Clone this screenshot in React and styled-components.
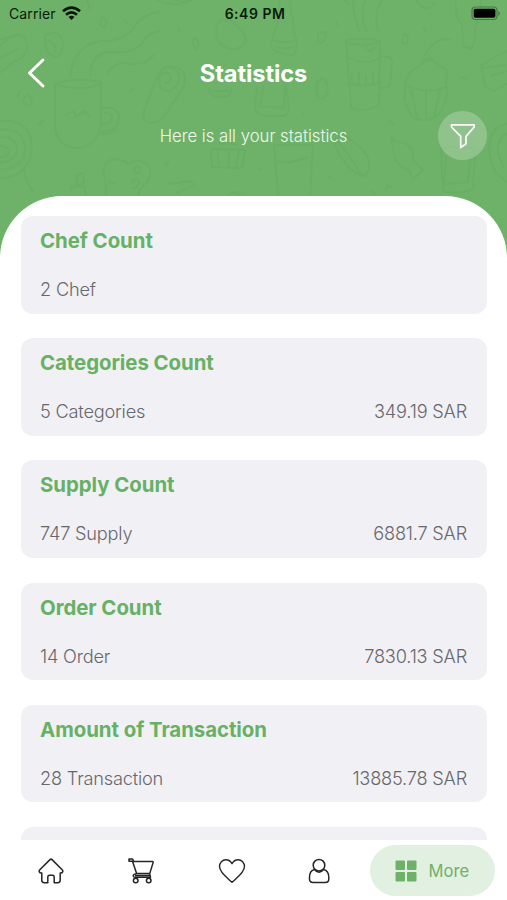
import React from 'react'
import styled, { createGlobalStyle } from 'styled-components'

const GlobalStyle = createGlobalStyle`
  * {
    box-sizing: border-box;
  }
  body {
    margin: 0;
    background: white;
    font-family: Inter, "Liberation Sans", sans-serif;
  }
  h1, h2, p {
    margin: 0;
  }
`

const Screen = styled.div`
  display: flex;
  flex-direction: column;
  width: 507px;
  height: 900px;
  overflow: hidden;
  background: white;
`

const Header = styled.header`
  position: relative;
  flex: 0 0 260px;
  background: #6eb269;
  color: white;
`

/* doodles sit behind the header content */
const Pattern = styled.svg`
  position: absolute;
  inset: 0;
  fill: none;
  stroke: #4f9550;
  stroke-width: 1.9;
  stroke-linecap: round;
  stroke-linejoin: round;
  opacity: 0.13;
`

const HeaderContent = styled.div`
  position: relative;
`

const StatusBar = styled.div`
  display: grid;
  grid-template-columns: 1fr auto 1fr;
  align-items: center;
  height: 27px;
  padding: 0 6px 0 9px;
  color: #0b1a0a;
  font-size: 14px;
  & .carrier {
    display: flex;
    align-items: center;
    gap: 6px;
    letter-spacing: 0.1px;
  }
  & .time {
    font-weight: 600;
    letter-spacing: 0.5px;
  }
  & .battery {
    justify-self: end;
  }
  & svg {
    display: block;
  }
`

const TitleRow = styled.div`
  display: grid;
  grid-template-columns: 60px 1fr 60px;
  align-items: center;
  height: 92px;
  padding: 0 19px 0 19px;
  & svg {
    display: block;
    margin-left: 7px;
  }
  & h1 {
    text-align: center;
    font-size: 23.6px;
    font-weight: 700;
    letter-spacing: -0.1px;
  }
`

const SubtitleRow = styled.div`
  display: grid;
  grid-template-columns: 60px 1fr 60px;
  align-items: center;
  height: 49px;
  margin-top: -8px;
  padding: 0 20px;
  & p {
    grid-column: 2;
    text-align: center;
    font-size: 16.7px;
    font-weight: 300;
    letter-spacing: 0;
    color: #edf8ec;
  }
`

const FilterButton = styled.button`
  display: flex;
  align-items: center;
  justify-content: center;
  justify-self: end;
  width: 49px;
  height: 49px;
  padding: 0;
  border: 0;
  border-radius: 50%;
  background: rgba(255, 255, 255, 0.23);
`

const Sheet = styled.main`
  position: relative;
  flex: 1 1 0;
  min-height: 0;
  margin-top: -64px;
  padding: 20px 20px 0 20.5px;
  overflow: hidden;
  border-radius: 62px 62px 0 0;
  background: white;
`

const Card = styled.section`
  height: 97.5px;
  margin-bottom: 24.7px;
  padding: 12px 20px 0 19.5px;
  border-radius: 12px;
  background: #f1f0f5;
`

const CardTitle = styled.h2`
  height: 26px;
  line-height: 26px;
  font-size: 20.4px;
  font-weight: 650;
  letter-spacing: -0.05px;
  color: #67b165;
`

const CardRow = styled.div`
  display: flex;
  justify-content: space-between;
  margin-top: 23px;
  line-height: 24px;
  font-size: 18.2px;
  font-weight: 300;
  letter-spacing: -0.2px;
  color: #68686c;
`

const TabBar = styled.nav`
  display: flex;
  align-items: center;
  flex: 0 0 60px;
  padding: 1px 12.500px 0 6px;
  background: white;
`

const Tab = styled.a`
  display: flex;
  justify-content: center;
  flex: 0 0 ${props => props.$width}px;
  color: #252525;
`

const ActiveTab = styled.a`
  display: flex;
  align-items: center;
  gap: 12px;
  width: 125px;
  height: 51px;
  margin-left: auto;
  padding-left: 25px;
  border-radius: 26px;
  background: #e1f0e1;
  color: #6eb269;
  font-size: 16.6px;
  font-weight: 400;
`

const stats = [
  { title: 'Chef Count', count: '2 Chef' },
  { title: 'Categories Count', count: '5 Categories', amount: '349.19 SAR' },
  { title: 'Supply Count', count: '747 Supply', amount: '6881.7 SAR' },
  { title: 'Order Count', count: '14 Order', amount: '7830.13 SAR' },
  { title: 'Amount of Transaction', count: '28 Transaction', amount: '13885.78 SAR' },
  { title: '', count: '' },
]

const Doodles = () => (
  <Pattern width="507" height="260" viewBox="0 0 507 260">
    {/* steaming mug */}
    <path d="M55 84q22-7 46-2v42q-2 22-25 24-18-1-21-20zM57 85q20 7 43-1M101 108q16-3 18 9 0 14-18 15M104 113q8-1 8 5t-9 6M66 115l7-4 3 6 8-6 5 5" />
    <path d="M70 77q5-33 31-36 23 1 34-15 10-13 24-14M90 76q0-23 21-24 27 3 35-15 6-4 13-6M107 73q10-13 23-9 15 1 24-9" />
    {/* swiss roll */}
    <path d="M146 106q-6 12 2 16 11 3 18-8l17-26q6-15-6-21-15-3-20 10zM160 80q-1-13 10-13 13 4 8 17-9 11-17 4-5-8 1-14 8-4 9 5-1 6-6 3" />
    {/* bread and leaves */}
    <path d="M0 46q16-16 25-8 6 13-5 21-9 3-20 14M0 40l19-6M0 58l18-9M45 36q9-7 16 1 5 13-4 20-13-1-12-21zM48 40q9 5 7 12M102 17q-5 9 2 10 6-6-2-10zM124 21l3 2M27 94q9 9 2 12-10-2-2-12zM20 91l-2 5M43 121l-4 4" />
    <path d="M217 26q3-9 14-5 15 10 15 20-5 9-16 8-17-5-13-23zM194 38q8 3 2 12-6-8-2-12zM178 29l2 3M130 92l3-3" />
    {/* onion rings */}
    <path d="M0 121q21-2 29 12 7 17-3 33-8 12-26 12M0 130q16-3 23 9 5 12-2 22-9 10-21 8M0 138q11-3 16 6 3 10-3 14-4 4-13 5M0 146q9 0 9 6-1 6-9 5M24 170q4 18 10 22" />
    {/* toast with face */}
    <path d="M106 196q1-11-2-22-2-14 11-15 9 1 13 5 12-7 20 1 6 13-5 21-4 4-5 10M134 168q2-4 6 0 2 7-5 4zM131 183q5-7 8-1-1 7-7 6M109 181q2 5 7 1M77 175l6-2 1 10-8 2zM71 190q0-4 13-4l2 9M168 184l23-3 3 4-18 8M165 166l4-4M99 130q0 4 6 4 13 0 13-14" />
    {/* gift, dishes and jar */}
    <path d="M211 149l34 1-3 18-30-1zM217 150l2 16M229 150v17M239 150l-3 16M219 143l18 1M209 88q1 9 9 9l10-1 4-7M213 91h17M228 196q4-6 9-3l6 4" />
    <path d="M257 87l-2 21q1 8 15 8h14q6-2 5-10l-4-23M263 86l-3 20 24 2 1-21M322 78q-9 8-4 20 8 2 10-8-1-11-6-12zM304 113l-2 3" />
    {/* pitcher */}
    <path d="M346 40q17-3 34 1l-1 64q-13 8-28 3zM346 42q15 6 34 0M349 58q16 8 31 0M347 83q15 5 34 0M352 75v10M359 72v13M366 75v10M373 72v12M381 56l8 1q4 2 3 7l-2 21q-3 5-11 2M366 47l4 5 5-5M367 31q-8-12-2-31M378 30q-5-17 4-30M359 31q-6-17-6-31" />
    {/* bottle and bulb */}
    <path d="M280 0l-2 22-7 20q-2 8 8 10 11 5 16 2 4-13-1-22l-4-32M273 40q10 4 21 1M276 47q8 3 18 0M404 34q7 1 2 10-7 0-2-10zM423 28l3 4M456 2q-2 14 6 23l1 21 9 3 3-12q-1-9 3-17l3-20M318 34q6-5 8 1-3 11-8 7zM336 22l2 3" />
    {/* cupcake */}
    <path d="M405 86q3-17 14-19 11-13 22 0 8 2 5 13 3 21-7 34-14 11-27 2-10-13-7-30zM406 85q20 10 40 2M411 90l6 26M426 91v27M440 90l-6 27M422 65q4-20 20-26l9 1M426 60q4-6 8 2" />
    {/* side pastries */}
    <path d="M507 51l-14 7-12 8 4 20 8 5 14-7M483 68l22-3M491 76l16-5M461 77l6 2M389 121l4 3" />
    {/* juice glasses */}
    <path d="M274 145l4 51M275 145h38l-3 51M278 161q10 4 30-4M335 139q9-6 16 1 14 9 18 21 1 14-6 15-12-4-20-16-9-12-8-21zM337 141q14 15 24 34M258 170l4-2M328 176l4 2" />
    <path d="M391 137l5 5 9 1 7 6 2 13 9 8-10 10-4-10q-10-1-14-12zM441 149q17-4 34 0l-2 40q-14 6-30 2zM446 157l-2 27 24-2 2-25M507 124q-15 2-17 19-3 15 7 31l10 8M507 133q-11 7-9 20l5 14M386 190q1-7 6-2M372 191l4 4" />
    <path d="M157 0q16 7 30 2M345 0l4 4M175 0q9 3 18 0M416 0q9 15 19 3M87 0l3 10" />
  </Pattern>
)

const WifiIcon = () => (
  <svg width="19" height="15" viewBox="0 0 19 15" fill="none" stroke="#0b160a" strokeWidth="2.700">
    <path d="M1 5.200Q9.500-2 18 5.200M4 8.700q5.500-4.600 11 0" />
    <path d="M9.500 14l-3-3.100q3-2.500 6 0z" fill="#0b160a" stroke="none" />
  </svg>
)

const BatteryIcon = () => (
  <svg className="battery" width="30" height="15" viewBox="0 0 30 15">
    <rect x="1" y="1" width="25" height="12.500" rx="3.500" fill="none" stroke="#467a43" strokeWidth="1.200" />
    <rect x="2.700" y="2.800" width="21.700" height="9" rx="1.700" fill="#000" />
    <path d="M27.300 5v5q1.500-.8 1.500-2.500T27.300 5z" fill="#467a43" />
  </svg>
)

const BackIcon = () => (
  <svg width="20" height="32" viewBox="0 0 20 32" fill="none" stroke="white" strokeWidth="2.900" strokeLinecap="round" strokeLinejoin="round">
    <path d="M17 3L3.500 16 17 29" />
  </svg>
)

const FilterIcon = () => (
  <svg width="26" height="26" viewBox="0 0 26 26" fill="none" stroke="white" strokeWidth="1.700" strokeLinejoin="round">
    <path d="M1.500 1.800h22.700v2.200L16 13.400v7.300l-5.300 3.800V13.400L1.500 4z" />
  </svg>
)

const HomeIcon = () => (
  <svg width="26" height="26" viewBox="0 0 26 26" fill="none" stroke="currentColor" strokeWidth="1.500" strokeLinejoin="round">
    <path d="M12 1.600q1-.9 2 0l10.200 10.100c1.300 1.400.4 3.300-1.400 3.300h-.6v7.300q0 2.400-2.400 2.400h-3.600v-5.700q0-1.700-1.700-1.700h-3q-1.700 0-1.700 1.700v5.700H6.200q-2.400 0-2.400-2.400V15h-.6c-1.800 0-2.700-1.900-1.400-3.300z" />
  </svg>
)

const CartIcon = () => (
  <svg width="26" height="26" viewBox="0 0 26 26" fill="none" stroke="currentColor" strokeWidth="1.500" strokeLinejoin="round">
    <path d="M1 1h3.600l1.200 2.600h19q.5 0 .3 1l-3.400 11H8.600L4.500 3.200H1zM8.600 15.600l-2.400.8q-1.600 1-.5 2.400.5.500 1.500.5h16M7 17.500h15.500M21.700 15.600l.8 3.700" />
    <circle cx="7.700" cy="22.500" r="2.300" />
    <circle cx="20.700" cy="22.500" r="2.300" />
  </svg>
)

const HeartIcon = () => (
  <svg width="28" height="26" viewBox="0 0 28 26" fill="none" stroke="currentColor" strokeWidth="1.400" strokeLinejoin="round">
    <path d="M14 24.300C11 21.300 1.500 15 1.500 8.600 1.500 4.500 4.400 1.800 7.800 1.800c2.800 0 4.900 1.500 6.200 3.900 1.300-2.400 3.400-3.900 6.200-3.900 3.400 0 6.300 2.700 6.300 6.800C26.500 15 17 21.300 14 24.300z" />
  </svg>
)

const UserIcon = () => (
  <svg width="22" height="26" viewBox="0 0 22 26" fill="none" stroke="currentColor" strokeWidth="1.500">
    <circle cx="11" cy="7.200" r="5.800" />
    <path d="M6.600 11.500C3.300 12.200 1.500 15.300 1.500 19.500v1.500c0 2 1.400 3.500 3.500 3.500h12.300c2.100 0 3.500-1.500 3.500-3.500v-1.500c0-4.200-2.100-7.300-5.400-8-2.500 3.600-6.300 3.600-8.800 0z" />
  </svg>
)

const GridIcon = () => (
  <svg width="22" height="22" viewBox="0 0 22 22" fill="currentColor">
    <rect x="0.500" y="0.500" width="9.500" height="9.500" rx="1" />
    <rect x="12" y="0.500" width="9.500" height="9.500" rx="1" />
    <rect x="0.500" y="12" width="9.500" height="9.500" rx="1" />
    <rect x="12" y="12" width="9.500" height="9.500" rx="1" />
  </svg>
)

const StatCard = ({ stat }) => (
  <Card>
    <CardTitle>{stat.title}</CardTitle>
    <CardRow>
      <span>{stat.count}</span>
      {stat.amount && <span>{stat.amount}</span>}
    </CardRow>
  </Card>
)

const App = () => {
  return (
    <Screen>
      <GlobalStyle />
      <Header>
        <Doodles />
        <HeaderContent>
          <StatusBar>
            <div className="carrier"><span>Carrier</span><WifiIcon /></div>
            <span className="time">6:49 PM</span>
            <BatteryIcon />
          </StatusBar>
          <TitleRow>
            <BackIcon />
            <h1>Statistics</h1>
          </TitleRow>
          <SubtitleRow>
            <p>Here is all your statistics</p>
            <FilterButton aria-label="Filter"><FilterIcon /></FilterButton>
          </SubtitleRow>
        </HeaderContent>
      </Header>
      <Sheet>
        {stats.map((stat, i) => <StatCard key={i} stat={stat} />)}
      </Sheet>
      <TabBar>
        <Tab $width={90}><HomeIcon /></Tab>
        <Tab $width={90}><CartIcon /></Tab>
        <Tab $width={91}><HeartIcon /></Tab>
        <Tab $width={84}><UserIcon /></Tab>
        <ActiveTab><GridIcon /><span>More</span></ActiveTab>
      </TabBar>
    </Screen>
  )
}

export default App
